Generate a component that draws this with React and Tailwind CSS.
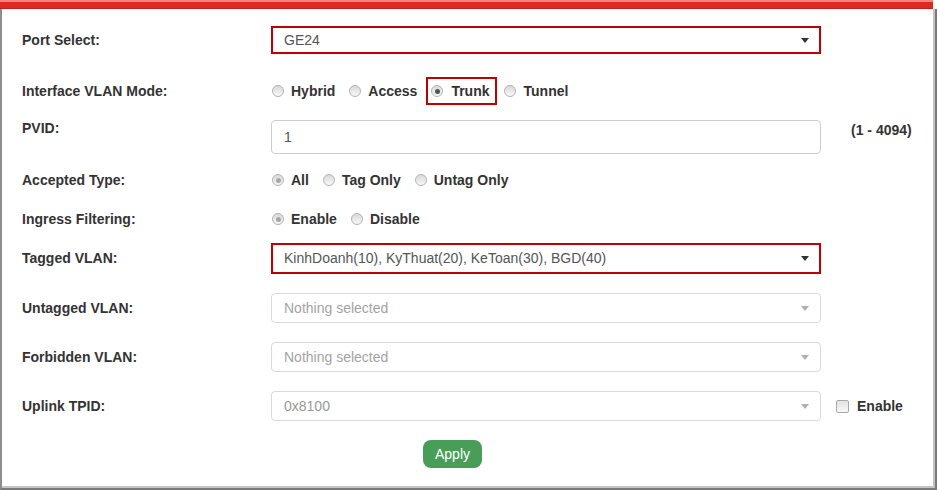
import React from 'react';

const font = { fontFamily: '"Liberation Sans", Arial, sans-serif' };

const Radio = ({ checked, dim }) => (
  <span className="w-[12px] h-[12px] shrink-0 rounded-full border border-[#b3b3b3] bg-linear-to-b from-[#d9d9d9] to-[#f8f8f8] flex items-center justify-center">
    {checked && <span className={`w-[5px] h-[5px] rounded-full ${dim ? 'bg-[#a6a6a6]' : 'bg-[#555]'}`}></span>}
  </span>
);

const Label = ({ children, top }) => (
  <div className={`w-[249px] shrink-0 text-[14px] font-bold text-[#333] ${top ? 'self-start leading-[16px]' : ''}`}>
    {children}
  </div>
);

const Caret = ({ muted }) => (
  <span className={`w-0 h-0 border-x-[4px] border-x-transparent border-t-[5px] ${muted ? 'border-t-[#b0b0b0]' : 'border-t-[#333]'}`}></span>
);

const Select = ({ value, red, muted, h }) => (
  <div
    className={`w-[550px] ${h} flex items-center justify-between bg-white text-[14px] ${
      red ? 'border-2 border-[#c00000] pl-[11px] pr-[10px]' : 'border border-[#d9d9d9] rounded-[4px] pl-[12px] pr-[11px]'
    } ${muted ? 'text-[#a3a3a3]' : 'text-[#555]'}`}
  >
    <span>{value}</span>
    <Caret muted={muted} />
  </div>
);

const Option = ({ label, checked, dim, first }) => (
  <div className={`flex items-center ${first ? 'ml-[1px]' : 'ml-[14px]'}`}>
    <Radio checked={checked} dim={dim} />
    <span className="ml-[7px] text-[14px] font-bold text-[#333]">{label}</span>
  </div>
);

export default function App() {
  return (
    <div className="w-[937px] h-[490px] bg-white flex flex-col" style={font}>
      {/* red top bar */}
      <div className="w-[933px] h-[9px] shrink-0 bg-[#dc2a22] border-t-[2px] border-t-[#f0857a] border-b border-b-[#b8231c]"></div>

      <div className="flex-1 flex flex-col border-l-[2px] border-l-[#8e8e8e] border-r-[2px] border-r-[#7a7a7a] border-b-[2px] border-b-[#7a7a7a]">
        <div className="flex-1 flex flex-col border-r-[2px] border-r-[#c4c4c4] border-b-[2px] border-b-[#c4c4c4] pl-[20px]">
          {/* Port Select */}
          <div className="flex items-center mt-[17px] h-[28px]">
            <Label>Port Select:</Label>
            <Select value="GE24" red h="h-[28px]" />
          </div>

          {/* Interface VLAN Mode */}
          <div className="flex items-center mt-[23px] h-[28px]">
            <Label>Interface VLAN Mode:</Label>
            <Option label="Hybrid" first />
            <Option label="Access" />
            <div className="ml-[9px] h-[28px] flex items-center border-2 border-[#c00000] pl-[3px] pr-[5px]">
              <Radio checked />
              <span className="ml-[8px] text-[14px] font-bold text-[#333]">Trunk</span>
            </div>
            <div className="flex items-center ml-[7px]">
              <Radio />
              <span className="ml-[8px] text-[14px] font-bold text-[#333]">Tunnel</span>
            </div>
          </div>

          {/* PVID */}
          <div className="flex items-center mt-[15px] h-[34px]">
            <Label top>PVID:</Label>
            <div className="w-[550px] h-[34px] flex items-center border border-[#cccccc] rounded-[4px] pl-[12px] text-[14px] text-[#555]">
              1
            </div>
            <span className="self-start mt-[2px] ml-[30px] leading-[16px] text-[14px] font-bold text-[#333]">(1 - 4094)</span>
          </div>

          {/* Accepted Type */}
          <div className="flex items-center mt-[12px] h-[28px]">
            <Label>Accepted Type:</Label>
            <Option label="All" checked dim first />
            <Option label="Tag Only" />
            <Option label="Untag Only" />
          </div>

          {/* Ingress Filtering */}
          <div className="flex items-center mt-[11px] h-[28px]">
            <Label>Ingress Filtering:</Label>
            <Option label="Enable" checked dim first />
            <Option label="Disable" />
          </div>

          {/* Tagged VLAN */}
          <div className="flex items-center mt-[10px] h-[31px]">
            <Label>Tagged VLAN:</Label>
            <Select value="KinhDoanh(10), KyThuat(20), KeToan(30), BGD(40)" red h="h-[31px]" />
          </div>

          {/* Untagged VLAN */}
          <div className="flex items-center mt-[19px] h-[30px]">
            <Label>Untagged VLAN:</Label>
            <Select value="Nothing selected" muted h="h-[30px]" />
          </div>

          {/* Forbidden VLAN */}
          <div className="flex items-center mt-[19px] h-[30px]">
            <Label>Forbidden VLAN:</Label>
            <Select value="Nothing selected" muted h="h-[30px]" />
          </div>

          {/* Uplink TPID */}
          <div className="flex items-center mt-[19px] h-[30px]">
            <Label>Uplink TPID:</Label>
            <div className="w-[550px] h-[30px] flex items-center justify-between border border-[#d9d9d9] rounded-[4px] pl-[12px] pr-[11px] text-[14px] text-[#999]">
              <span>0x8100</span>
              <Caret muted />
            </div>
            <span className="ml-[15px] w-[13px] h-[13px] rounded-[2px] border border-[#a9a9a9] bg-linear-to-b from-[#e2e2e2] to-[#f8f8f8]"></span>
            <span className="ml-[8px] text-[14px] font-bold text-[#333]">Enable</span>
          </div>

          {/* Apply */}
          <div className="flex mt-[19px]">
            <button className="ml-[401px] w-[59px] h-[28px] rounded-[8px] bg-[#489e59] text-white text-[14px] flex items-center justify-center">
              Apply
            </button>
          </div>
        </div>
      </div>
    </div>
  );
}
